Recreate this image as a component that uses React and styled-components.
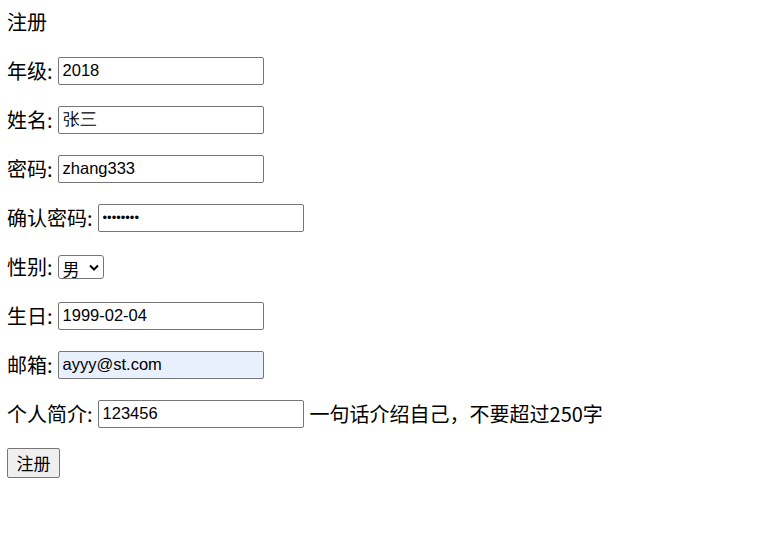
import React from 'react';
import styled, { createGlobalStyle } from 'styled-components';

const GlobalStyle = createGlobalStyle`
  body {
    margin: 0;
    background: #fff;
    color: #000;
    font-family: "Noto Sans CJK SC", "Liberation Sans", sans-serif;
    font-size: 20px;
  }
`;

const Page = styled.form`
  display: flex;
  flex-direction: column;
  gap: 16px;
  padding: 5px 7px;
`;

const Row = styled.div`
  display: flex;
  align-items: center;
  height: 33px;
  white-space: nowrap;
`;

const Label = styled.span`
  margin-right: 5px;
`;

const Field = styled.input`
  box-sizing: border-box;
  width: 206px;
  height: 28px;
  padding: 1px 4px;
  border: 1px solid #767676;
  border-radius: 2px;
  font-family: "Liberation Sans", Arial, sans-serif;
  font-size: ${(p) => (p.type === 'password' ? '13px' : '16.5px')};
  color: #000;
  background: ${(p) => (p.$filled ? '#e8f0fe' : '#fff')};
  outline: none;
`;

const Hint = styled.span`
  margin-left: 6px;
`;

const SelectBox = styled.span`
  position: relative;
  display: inline-flex;
`;

const Select = styled.select`
  appearance: none;
  box-sizing: border-box;
  width: 46px;
  height: 24px;
  padding: 0 18px 0 4px;
  border: 1px solid #767676;
  border-radius: 3px;
  background: #fff;
  font-family: "Noto Sans CJK SC", sans-serif;
  font-size: 17px;
  color: #000;
`;

const Chevron = styled.svg`
  position: absolute;
  right: 5px;
  top: 9px;
  pointer-events: none;
`;

const Button = styled.button`
  box-sizing: border-box;
  width: 53px;
  height: 30px;
  padding: 0;
  border: 1px solid #767676;
  border-radius: 2px;
  background: #efefef;
  font-family: "Noto Sans CJK SC", sans-serif;
  font-size: 17px;
  color: #000;
`;

const fields = [
  { label: '年级:', value: '2018' },
  { label: '姓名:', value: '张三' },
  { label: '密码:', value: 'zhang333' },
  { label: '确认密码:', value: 'zhang333', type: 'password' },
];

const App = () => (
  <>
    <GlobalStyle />
    <Page onSubmit={(e) => e.preventDefault()}>
      <Row>注册</Row>
      {fields.map((f) => (
        <Row key={f.label}>
          <Label>{f.label}</Label>
          <Field type={f.type || 'text'} defaultValue={f.value} />
        </Row>
      ))}
      <Row>
        <Label>性别:</Label>
        <SelectBox>
          <Select defaultValue="男">
            <option>男</option>
            <option>女</option>
          </Select>
          <Chevron width="10" height="7" viewBox="0 0 10 7">
            <path d="M1 1.5 L5 5.5 L9 1.5" fill="none" stroke="#000" strokeWidth="2" />
          </Chevron>
        </SelectBox>
      </Row>
      <Row>
        <Label>生日:</Label>
        <Field defaultValue="1999-02-04" />
      </Row>
      <Row>
        <Label>邮箱:</Label>
        <Field $filled defaultValue="ayyy@st.com" />
      </Row>
      <Row>
        <Label>个人简介:</Label>
        <Field defaultValue="123456" />
        <Hint>一句话介绍自己，不要超过250字</Hint>
      </Row>
      <Row>
        <Button type="submit">注册</Button>
      </Row>
    </Page>
  </>
);

export default App;
